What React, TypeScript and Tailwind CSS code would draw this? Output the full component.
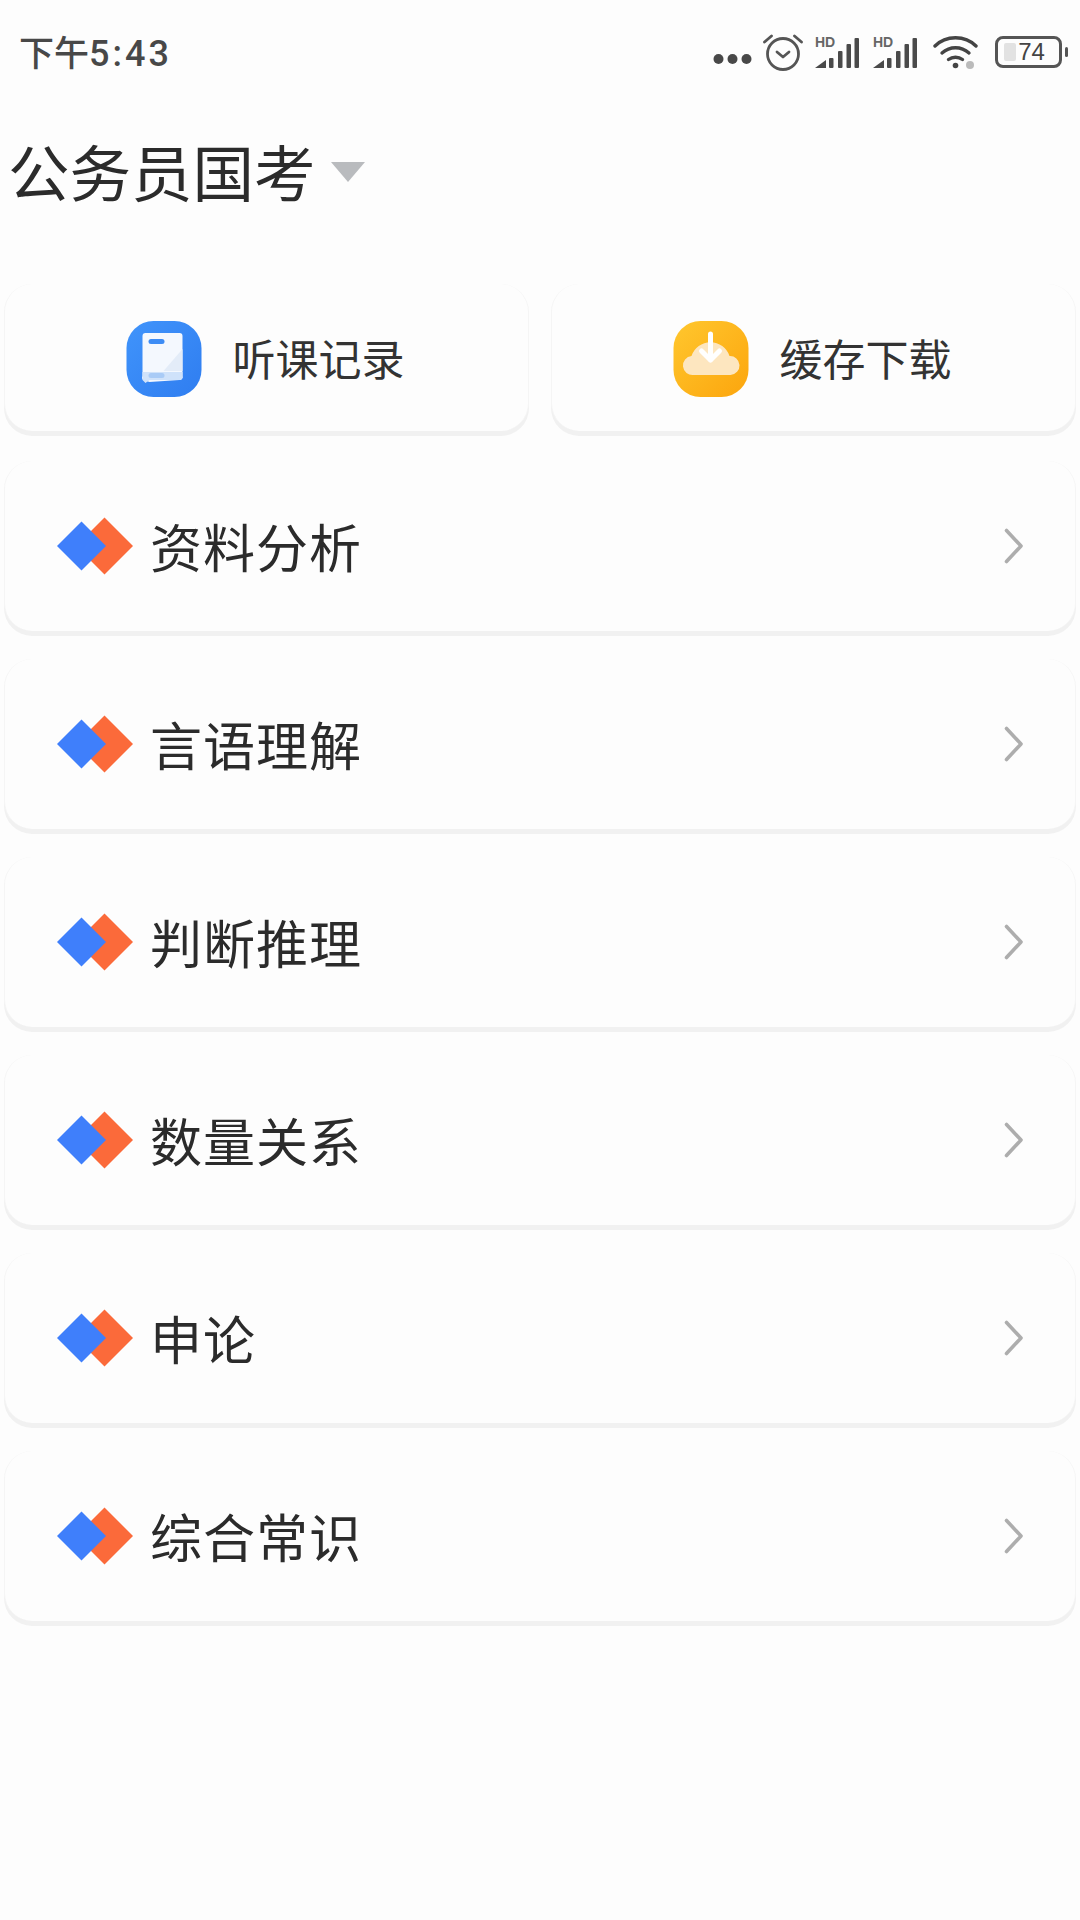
const FONT = '"Noto Sans CJK SC","Noto Sans",sans-serif';

function Dots() {
  return (
    <svg width="39" height="12" viewBox="0 0 39 12" fill="#484848">
      <circle cx="5.5" cy="6" r="5" /><circle cx="19.5" cy="6" r="5" /><circle cx="33.5" cy="6" r="5" />
    </svg>
  );
}

function Alarm() {
  return (
    <svg width="40" height="38" viewBox="0 0 40 38" fill="none" stroke="#555" strokeWidth="2.8" strokeLinecap="round" strokeLinejoin="round">
      <circle cx="20" cy="21" r="15.5" />
      <path d="M14 19l6 5 6-5" />
      <path d="M1.5 9l7-6M38.5 9l-7-6" />
    </svg>
  );
}

function Signal() {
  return (
    <div className="relative h-[34px] w-[44px]">
      <span className="absolute left-0 top-0 text-[14px] font-bold leading-[14px] text-[#666]" style={{ fontFamily: '"Liberation Sans",sans-serif' }}>HD</span>
      <svg width="44" height="34" viewBox="0 0 44 34" fill="#4a4a4a">
        <path d="M0 33l11-8v8z" />
        <rect x="14" y="23" width="4.5" height="10" rx="1" />
        <rect x="23" y="16" width="4.5" height="17" rx="1" />
        <rect x="31.5" y="9" width="4.5" height="24" rx="1" />
        <rect x="39.5" y="3" width="4.5" height="30" rx="1" />
      </svg>
    </div>
  );
}

function Wifi() {
  return (
    <svg width="45" height="34" viewBox="0 0 45 34" fill="none" stroke="#444" strokeWidth="3.4" strokeLinecap="round">
      <path d="M2 11C13 0 32 0 43 11" />
      <path d="M9 18c8-7 19-7 27 0" />
      <path d="M15.5 24.5c4-3 10-3 14 0" />
      <circle cx="22.5" cy="30.5" r="2.8" fill="#444" stroke="none" />
      <circle cx="37" cy="30" r="4" fill="#bbb" stroke="none" />
    </svg>
  );
}

function Battery() {
  return (
    <div className="flex items-center gap-[3px]">
      <div className="relative flex h-[32px] w-[67px] items-center justify-center rounded-[8px] border-[3px] border-[#555]">
        <div className="absolute bottom-[4px] left-[6px] top-[4px] w-[12px] rounded-[2px] bg-[#e2e2e2]" />
        <span className="relative ml-[6px] text-[24px] leading-none text-[#444]" style={{ fontFamily: '"Liberation Sans",sans-serif' }}>74</span>
      </div>
      <div className="h-[10px] w-[3px] rounded-sm bg-[#555]" />
    </div>
  );
}

function BookIcon() {
  return (
    <svg width="76" height="76" viewBox="0 0 75 76" className="mt-[3px]">
      <defs>
        <linearGradient id="b1" x1="0" y1="0" x2="1" y2="1">
          <stop offset="0" stopColor="#4094fb" /><stop offset="1" stopColor="#2f7df0" />
        </linearGradient>
      </defs>
      <rect width="75" height="76" rx="27" fill="url(#b1)" />
      <path d="M19 12h34a3 3 0 0 1 3 3v40a3 3 0 0 1-3 4l-30 2-6-2a3 3 0 0 1-1-4V15a3 3 0 0 1 3-3z" fill="#f4f8fe" />
      <path d="M56 28v22H37z" fill="#e3ecf8" />
      <path d="M16 51h40v4a3 3 0 0 1-3 4H23l-4 3-3-3z" fill="#cfe2fa" />
      <rect x="22" y="52" width="16" height="5" rx="2.5" fill="#a9cbf6" />
      <rect x="22" y="18" width="16" height="5" rx="2.5" fill="#3d8cf5" />
    </svg>
  );
}

function CloudIcon() {
  return (
    <svg width="76" height="76" viewBox="0 0 75 76" className="mt-[3px]">
      <defs>
        <linearGradient id="o1" x1="0" y1="0" x2="1" y2="1">
          <stop offset="0" stopColor="#ffc72e" /><stop offset="1" stopColor="#fca50d" />
        </linearGradient>
      </defs>
      <rect width="75" height="76" rx="27" fill="url(#o1)" />
      <path d="M20 54a9.500 9.500 0 0 1-2-19 20 20 0 0 1 38 0 9.500 9.500 0 0 1 1 19z" fill="#fde6bf" />
      <path d="M37 13v26M28 30l9 9 9-9" fill="none" stroke="#fff" strokeWidth="5" strokeLinecap="round" strokeLinejoin="round" />
    </svg>
  );
}

function Diamonds() {
  return (
    <svg width="76" height="58" viewBox="0 0 76 58" className="shrink-0">
      <path d="M47.500 .5l28.500 28.500-28.500 28.500-28.500-28.500z" fill="#fb6a3a" />
      <path d="M24.500 4.500l24.500 24.500-24.500 24.500L0 29z" fill="#3f7ffb" />
    </svg>
  );
}

function Chevron() {
  return (
    <svg width="19" height="36" viewBox="0 0 19 36" fill="none" stroke="#adadad" strokeWidth="3.6" strokeLinecap="round" strokeLinejoin="round">
      <path d="M2.500 2.500L17 18 2.500 33.500" />
    </svg>
  );
}

const cardClass = 'rounded-[28px] border-x border-x-[#f5f5f5] bg-[#fdfdfd] shadow-[0_5px_0_#f1f1f1]';

const rows = ['资料分析', '言语理解', '判断推理', '数量关系', '申论', '综合常识'];

export default function App() {
  return (
    <div className="flex h-[1920px] w-[1080px] flex-col overflow-hidden bg-[#fdfdfd]" style={{ fontFamily: FONT }}>
      <div className="flex h-[104px] items-center justify-between pl-[19px] pr-[12px]">
        <span className="text-[35px] font-medium leading-none text-[#484848]">
          下午<span className="text-[36px] tracking-[3px]" style={{ fontFamily: 'Roboto,sans-serif' }}>5:43</span>
        </span>
        <div className="flex items-center">
          <div className="mt-[14px]"><Dots /></div>
          <div className="ml-[11px]"><Alarm /></div>
          <div className="ml-[12px]"><Signal /></div>
          <div className="ml-[14px]"><Signal /></div>
          <div className="ml-[16px]"><Wifi /></div>
          <div className="ml-[17px]"><Battery /></div>
        </div>
      </div>

      <div className="flex h-[144px] items-center pb-[10px] pl-[8px]">
        <span className="text-[61.5px] leading-none text-[#2b2b2b]">公务员国考</span>
        <svg width="34" height="20" viewBox="0 0 34 20" className="ml-[15px] mt-[2px]">
          <path d="M0 0h34L17 20z" fill="#b9bbbe" />
        </svg>
      </div>

      <div className="mt-[36px] flex justify-between px-[4px]">
        {[
          { label: '听课记录', icon: <BookIcon /> },
          { label: '缓存下载', icon: <CloudIcon /> },
        ].map((c) => (
          <div key={c.label} className={`flex h-[147px] w-[525px] items-center justify-center gap-[31px] pr-[3px] ${cardClass}`}>
            {c.icon}
            <span className="text-[43px] leading-none text-[#333]">{c.label}</span>
          </div>
        ))}
      </div>

      <div className="mt-[30px] flex flex-col gap-[28px] px-[4px]">
        {rows.map((r) => (
          <div key={r} className={`flex h-[170px] items-center pl-[52px] pr-[52px] ${cardClass}`}>
            <Diamonds />
            <span className="ml-[17px] flex-1 text-[52px] leading-none tracking-[1px] text-[#2b2b2b]">{r}</span>
            <Chevron />
          </div>
        ))}
      </div>
    </div>
  );
}
